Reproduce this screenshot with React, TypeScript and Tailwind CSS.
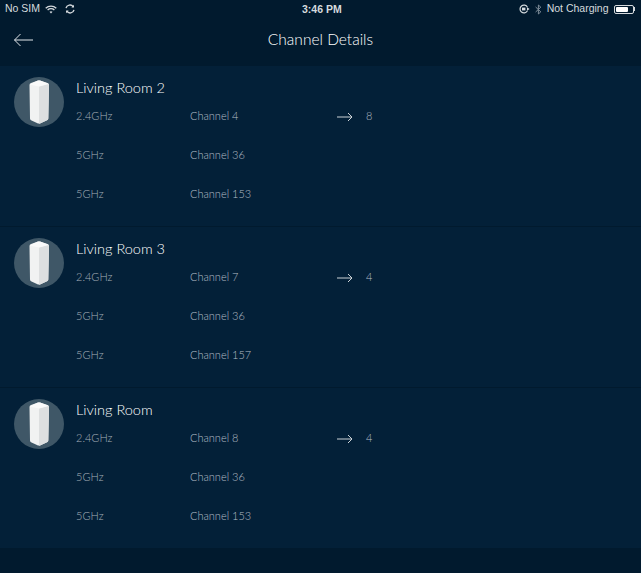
const nodes = [
  {
    name: 'Living Room 2',
    rows: [
      { band: '2.4GHz', channel: 'Channel 4', next: '8' },
      { band: '5GHz', channel: 'Channel 36' },
      { band: '5GHz', channel: 'Channel 153' },
    ],
  },
  {
    name: 'Living Room 3',
    rows: [
      { band: '2.4GHz', channel: 'Channel 7', next: '4' },
      { band: '5GHz', channel: 'Channel 36' },
      { band: '5GHz', channel: 'Channel 157' },
    ],
  },
  {
    name: 'Living Room',
    rows: [
      { band: '2.4GHz', channel: 'Channel 8', next: '4' },
      { band: '5GHz', channel: 'Channel 36' },
      { band: '5GHz', channel: 'Channel 153' },
    ],
  },
]

function NodeIcon() {
  return (
    <div className="w-[50px] h-[50px] rounded-full bg-[#3f5767] flex items-center justify-center shrink-0">
      <svg width="20" height="44" viewBox="0 0 20 44">
        <path d="M0.5 5 Q0.5 3.6 2 3 L9 0.6 Q10 0.3 11 0.6 L18.5 3 Q20 3.6 20 5 L19.3 38.5 Q19.3 39.6 18 40.2 L11 43.4 Q10 43.8 9 43.4 L2 40.2 Q1 39.6 1 38.5 Z" fill="#f1f2f2" />
        <path d="M10 6.5 L20 4 L19.3 38.5 Q19.3 39.6 18 40.2 L11 43.4 Q10.5 43.7 10 43.6 Z" fill="#dddfe0" />
        <path d="M0.7 4.4 L9 0.6 Q10 0.3 11 0.6 L19.6 3.8 L10 6.5 Z" fill="#fafafa" />
      </svg>
    </div>
  )
}

function WifiIcon() {
  return (
    <svg width="12" height="9" viewBox="0 0 12 9" fill="none" stroke="#d5dade" strokeWidth="1.3">
      <path d="M0.7 3.2 C3.6 0.4 8.4 0.4 11.3 3.2" />
      <path d="M2.6 5 C4.5 3.3 7.5 3.3 9.4 5" />
      <path d="M6 8.6 L4.5 6.8 C5.4 6.1 6.6 6.1 7.5 6.8 Z" fill="#d5dade" stroke="none" />
    </svg>
  )
}

function SyncIcon() {
  return (
    <svg width="10" height="10" viewBox="0 0 10 10" fill="none" stroke="#d5dade" strokeWidth="1.4">
      <path d="M1 4.2 A4 4 0 0 1 8.2 2.8" />
      <path d="M9 5.8 A4 4 0 0 1 1.8 7.2" />
      <path d="M9 0.8 V3.6 H6.4 Z" fill="#d5dade" stroke="none" />
      <path d="M1 9.2 V6.4 H3.6 Z" fill="#d5dade" stroke="none" />
    </svg>
  )
}

function LockIcon() {
  return (
    <svg width="11" height="10" viewBox="0 0 11 10" fill="none" stroke="#d5dade" strokeWidth="1.2">
      <path d="M8.4 6.8 A3.9 3.9 0 1 1 8.4 3.2" />
      <rect x="3" y="3.6" width="3.4" height="2.8" fill="#d5dade" stroke="none" />
      <path d="M8 3.2 L10.6 5 L8 6.8 Z" fill="#d5dade" stroke="none" />
    </svg>
  )
}

function BluetoothIcon() {
  return (
    <svg width="7" height="11" viewBox="0 0 7 11" fill="none" stroke="#7f8d99" strokeWidth="1">
      <path d="M0.6 3 L5.8 7.8 L3.4 10 V1 L5.8 3.2 L0.6 8" />
    </svg>
  )
}

function Battery() {
  return (
    <div className="flex items-center">
      <div className="w-[20px] h-[9px] border border-[#d5dade] rounded-[2px] p-px">
        <div className="w-[12px] h-full bg-white rounded-[1px]" />
      </div>
      <div className="w-[1.5px] h-[4px] bg-[#d5dade]" />
    </div>
  )
}

function Row({ band, channel, next }: { band: string; channel: string; next?: string }) {
  return (
    <div className="h-[39px] flex items-center text-[11px] font-light text-[#a3aeb7]">
      <div className="w-[114px]">{band}</div>
      <div className="w-[147px] text-[#b4bec6]">{channel}</div>
      {next && (
        <>
          <svg width="16" height="10" viewBox="0 0 16 10" fill="none" stroke="#ccd2d6" strokeWidth="1">
            <path d="M0 5 H15 M11 1 L15 5 L11 9" />
          </svg>
          <div className="ml-[13px] text-[#b4bec6]">{next}</div>
        </>
      )}
    </div>
  )
}

export default function App() {
  return (
    <div className="w-[641px] h-[573px] bg-[#011a2e] overflow-hidden font-['Lato','Liberation_Sans',sans-serif]">
      {/* Status bar */}
      <div className="h-[18px] px-[5px] flex items-center justify-between text-[10.5px] text-[#d5dade] font-['Liberation_Sans',sans-serif] relative">
        <div className="flex items-center gap-[5px]">
          <span>No SIM</span>
          <WifiIcon />
          <span className="ml-[3px]"><SyncIcon /></span>
        </div>
        <div className="absolute left-[302px] top-[2px] font-semibold">3:46 PM</div>
        <div className="flex items-center gap-[5px] pr-[1px]">
          <LockIcon />
          <BluetoothIcon />
          <span>Not Charging</span>
          <Battery />
        </div>
      </div>

      {/* Header */}
      <div className="h-[48px] px-[13px] flex items-center relative">
        <svg width="21" height="14" viewBox="0 0 21 14" fill="none" stroke="#e3e7ea" strokeWidth="1" className="-mt-[5px]">
          <path d="M20 7 H1.5 M7.5 1 L1.5 7 L7.5 13" />
        </svg>
        <div className="absolute inset-x-0 top-[10px] text-center text-[15.5px] font-light text-white">
          Channel Details
        </div>
      </div>

      {/* Nodes */}
      <div className="flex flex-col gap-px">
        {nodes.map((node) => (
          <div key={node.name} className="h-[160px] bg-[#032038] flex pl-[14px] pt-[11px]">
            <NodeIcon />
            <div className="ml-[12px]">
              <div className="h-[21px] flex items-center text-[14.5px] font-light text-white">{node.name}</div>
              <div className="-mt-[1px]">
                {node.rows.map((row, i) => (
                  <Row key={i} {...row} />
                ))}
              </div>
            </div>
          </div>
        ))}
      </div>
    </div>
  )
}
